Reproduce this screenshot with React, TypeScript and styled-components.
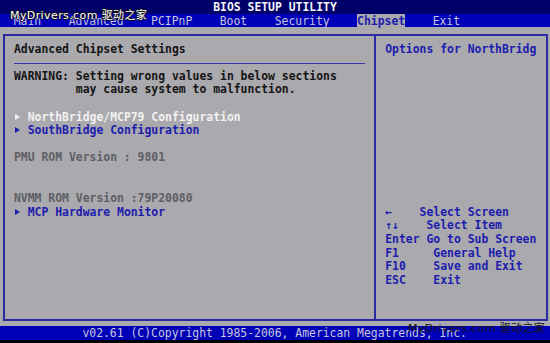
import { createGlobalStyle, styled } from "styled-components";

const ROW = 13.6;
const COL = 6.875;

const GlobalStyle = createGlobalStyle`
  html, body {
    margin: 0;
    padding: 0;
    background: #000;
  }
`;

const Screen = styled.div`
  position: relative;
  width: 550px;
  height: 343px;
  overflow: hidden;
  background: #000;
  font-family: "DejaVu Sans Mono", "Liberation Mono", monospace;
  font-size: 11.42px;
  font-weight: bold;
  line-height: ${ROW}px;
  white-space: pre;
`;

const TitleBar = styled.div`
  height: ${ROW}px;
  background: #00006a;
  color: #f4f4f4;
  text-align: center;
  padding-top: 0.5px;
  box-sizing: border-box;
`;

const TabBar = styled.div`
  height: ${ROW}px;
  background: #0000b8;
  color: #c4c4dc;
  font-weight: normal;
  padding-top: 1px;
  box-sizing: border-box;
`;

const Tab = styled.span<{ $active?: boolean }>`
  background: ${(p) => (p.$active ? "#aaa9ad" : "transparent")};
  color: ${(p) => (p.$active ? "#1c1cae" : "inherit")};
  font-weight: ${(p) => (p.$active ? "bold" : "normal")};
`;

const Body = styled.div`
  height: ${ROW * 22}px;
  background: #aaa9ad;
  padding: 7px 2px 5px 3px;
  box-sizing: border-box;
`;

const Frame = styled.div`
  height: 100%;
  box-sizing: border-box;
  border: 2px solid #2a2aa2;
  display: grid;
  grid-template-columns: ${COL * 54 - 2}px 2px 1fr;
`;

const Divider = styled.div`
  background: #2a2aa2;
`;

const Panel = styled.div<{ $pad: number }>`
  padding-top: 6.5px;
  padding-left: ${(p) => p.$pad}px;
  display: flex;
  flex-direction: column;
`;

const Line = styled.div<{ $tone?: "black" | "blue" | "white" | "dim" }>`
  height: ${ROW}px;
  color: ${(p) =>
    p.$tone === "blue"
      ? "#1c1cae"
      : p.$tone === "white"
      ? "#f2f2f2"
      : p.$tone === "dim"
      ? "#5e5e64"
      : "#141414"};
`;

const Rule = styled.div`
  height: ${ROW}px;
  display: flex;
  align-items: center;
  padding-right: 9px;

  &::after {
    content: "";
    flex: 1;
    height: 1px;
    background: #3a3ab0;
  }
`;

const Arrow = styled.span`
  display: inline-block;
  width: ${COL * 2}px;
  &::before {
    content: "";
    display: inline-block;
    margin-left: 1px;
    border-left: 5px solid currentColor;
    border-top: 3px solid transparent;
    border-bottom: 3px solid transparent;
    vertical-align: 1px;
  }
`;

const Gap = styled.div<{ $rows: number }>`
  height: ${(p) => p.$rows * ROW}px;
  flex-shrink: 0;
`;

const BottomBar = styled.div`
  height: ${ROW}px;
  background: #0000b8;
  color: #c8c8dc;
  font-weight: normal;
  padding-top: 1px;
  box-sizing: border-box;
`;

const Watermark = styled.div<{ $dark?: boolean }>`
  position: absolute;
  font-family: "DejaVu Sans", "Noto Sans CJK SC", sans-serif;
  font-size: 11px;
  line-height: 13px;
  font-weight: normal;
  letter-spacing: 0.4px;
  color: ${(p) => (p.$dark ? "#161616" : "#ffffff")};
  text-shadow: ${(p) =>
    p.$dark
      ? "none"
      : "1px 0 0 #111, -1px 0 0 #111, 0 1px 0 #111, 0 -1px 0 #111"};
`;

const help: [string, string][] = [
  ["←", "    Select Screen"],
  ["↑↓", "    Select Item"],
  ["Enter", " Go to Sub Screen"],
  ["F1", "     General Help"],
  ["F10", "    Save and Exit"],
  ["ESC", "    Exit"],
];

const tabs = ["Main", "Advanced", "PCIPnP", "Boot", "Security", "Chipset", "Exit"];

export default function App() {
  return (
    <>
      <GlobalStyle />
      <Screen>
        <TitleBar>BIOS SETUP UTILITY</TitleBar>
        <TabBar>
          {"  "}
          {tabs.map((t, i) => (
            <span key={t}>
              <Tab $active={t === "Chipset"}>{t}</Tab>
              {i < tabs.length - 1 ? "    " : ""}
            </span>
          ))}
        </TabBar>
        <Body>
          <Frame>
            <Panel $pad={9}>
              <Line>Advanced Chipset Settings</Line>
              <Rule />
              <Line>WARNING: Setting wrong values in below sections</Line>
              <Line>{"         may cause system to malfunction."}</Line>
              <Gap $rows={1} />
              <Line $tone="white">
                <Arrow />
                NorthBridge/MCP79 Configuration
              </Line>
              <Line $tone="blue">
                <Arrow />
                SouthBridge Configuration
              </Line>
              <Gap $rows={1} />
              <Line $tone="dim">PMU ROM Version : 9801</Line>
              <Gap $rows={2} />
              <Line $tone="dim">NVMM ROM Version :79P20080</Line>
              <Line $tone="blue">
                <Arrow />
                MCP Hardware Monitor
              </Line>
            </Panel>
            <Divider />
            <Panel $pad={9}>
              <Line $tone="blue">Options for NorthBridg</Line>
              <Gap $rows={11} />
              {help.map(([k, v]) => (
                <Line key={k} $tone="blue">
                  {k}
                  {v}
                </Line>
              ))}
            </Panel>
          </Frame>
        </Body>
        <BottomBar>
          {"            v02.61 (C)Copyright 1985-2006, American Megatrends, Inc."}
        </BottomBar>
        <Watermark style={{ left: 10, top: 9 }}>MyDrivers.com 驱动之家</Watermark>
        <Watermark $dark style={{ left: 408, top: 322 }}>
          MyDrivers.com 驱动之家
        </Watermark>
      </Screen>
    </>
  );
}
